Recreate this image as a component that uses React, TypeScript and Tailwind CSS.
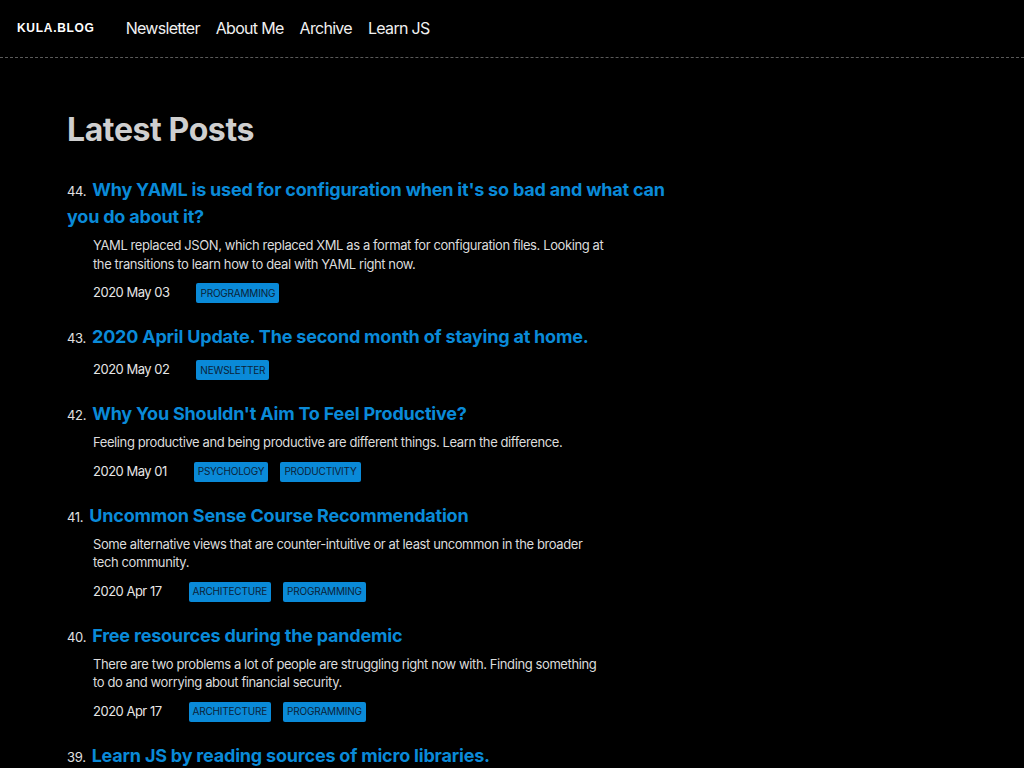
import React from "react";

type Post = { n: number; title: string; desc?: string; date: string; tags: string[] };

const posts: Post[] = [
  {
    n: 44,
    title: "Why YAML is used for configuration when it's so bad and what can you do about it?",
    desc: "YAML replaced JSON, which replaced XML as a format for configuration files. Looking at the transitions to learn how to deal with YAML right now.",
    date: "2020 May 03",
    tags: ["PROGRAMMING"],
  },
  { n: 43, title: "2020 April Update. The second month of staying at home.", date: "2020 May 02", tags: ["NEWSLETTER"] },
  {
    n: 42,
    title: "Why You Shouldn't Aim To Feel Productive?",
    desc: "Feeling productive and being productive are different things. Learn the difference.",
    date: "2020 May 01",
    tags: ["PSYCHOLOGY", "PRODUCTIVITY"],
  },
  {
    n: 41,
    title: "Uncommon Sense Course Recommendation",
    desc: "Some alternative views that are counter-intuitive or at least uncommon in the broader tech community.",
    date: "2020 Apr 17",
    tags: ["ARCHITECTURE", "PROGRAMMING"],
  },
  {
    n: 40,
    title: "Free resources during the pandemic",
    desc: "There are two problems a lot of people are struggling right now with. Finding something to do and worrying about financial security.",
    date: "2020 Apr 17",
    tags: ["ARCHITECTURE", "PROGRAMMING"],
  },
  {
    n: 39,
    title: "Learn JS by reading sources of micro libraries.",
    desc: "Reading sources of small libraries is a great way to learn.",
    date: "2020 Apr 10",
    tags: ["JAVASCRIPT"],
  },
];

export default function App() {
  return (
    <div
      className="min-h-screen bg-black text-[#e6e6e6]"
      style={{ fontFamily: "Inter, 'Noto Sans', sans-serif" }}
    >
      <header className="h-[58px] flex items-center border-b border-dashed border-[#5a5a5a] pl-[17px] pb-[2px]">
        <a
          className="text-[12px] font-extrabold tracking-[0.7px] text-white mr-[31px]"
          style={{ fontFamily: "'Liberation Sans', Arial, sans-serif" }}
        >
          KULA.BLOG
        </a>
        <nav className="flex gap-[16px] text-[16px] tracking-[-0.7px] text-[#f0f0f0]">
          <a>Newsletter</a>
          <a>About Me</a>
          <a>Archive</a>
          <a>Learn JS</a>
        </nav>
      </header>
      <main className="pl-[67px] pt-[52px] w-[676px]">
        <h1 className="text-[32px] font-bold text-[#cfcfcf] leading-[40px] tracking-[-0.4px] mb-[26px]">Latest Posts</h1>
        <div className="flex flex-col gap-[20px]">
          {posts.map((p) => (
            <article key={p.n}>
              <h2 className="text-[18px] leading-[27px] font-bold tracking-[-0.2px]">
                <span className="text-[13px] leading-none font-normal text-[#e0e0e0] mr-[6px] tracking-[-0.3px]">{p.n}.</span>
                <a className="text-[#0a8ad8]">{p.title}</a>
              </h2>
              <div className="pl-[26px]">
                {p.desc && (
                  <p className="text-[13px] leading-[18.5px] text-[#dcdcdc] mt-[6px] w-[512px] tracking-[-0.4px]">{p.desc}</p>
                )}
                <div className="flex items-center mt-[10px]">
                  <span className="text-[13px] text-[#e6e6e6] mr-[27px] tracking-[-0.5px]">{p.date}</span>
                  <div className="flex gap-[12px]">
                    {p.tags.map((t) => (
                      <span
                        key={t}
                        className="h-[20px] px-[4px] flex items-center rounded-[2px] bg-[#0a8ad8] text-[#0b2338] text-[10px] tracking-[-0.2px]"
                      >
                        {t}
                      </span>
                    ))}
                  </div>
                </div>
              </div>
            </article>
          ))}
        </div>
      </main>
    </div>
  );
}
